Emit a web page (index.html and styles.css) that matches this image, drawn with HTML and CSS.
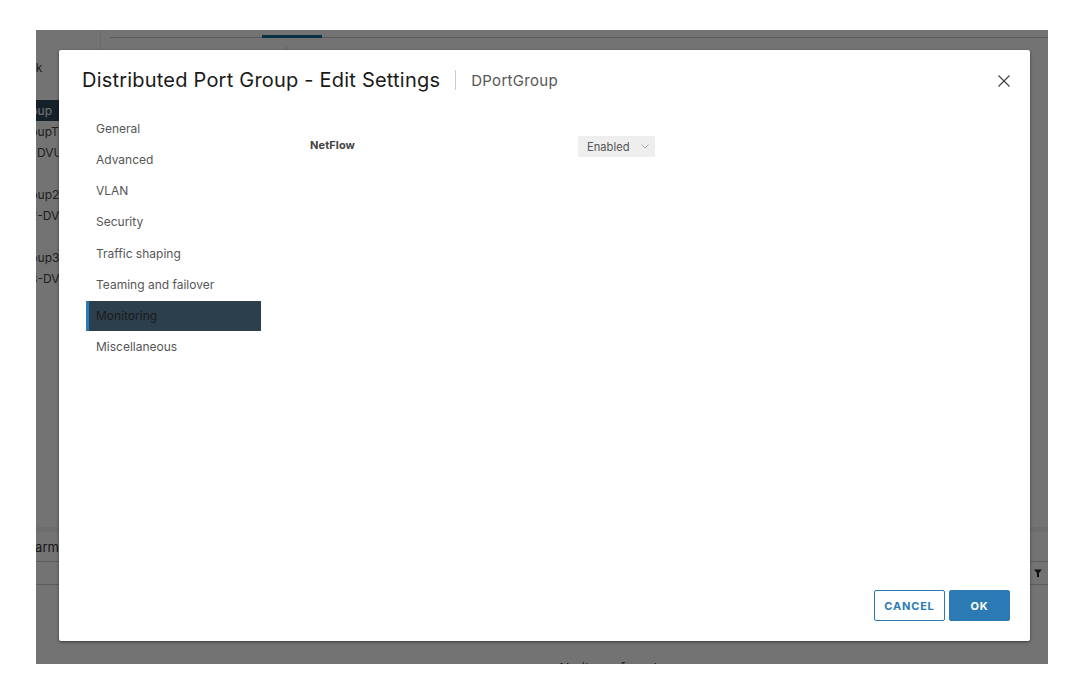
FILE: index.html
```html
<!DOCTYPE html>
<html lang="en">
<head>
<meta charset="utf-8">
<title>Distributed Port Group - Edit Settings</title>
<link rel="stylesheet" href="styles.css">
</head>
<body>
<div class="stage">
  <div class="app">
    <div class="app-main">
      <aside class="tree">
        <div class="tree-row tree-first">Network</div>
        <div class="tree-row tree-selected">DPortGroup</div>
        <div class="tree-row">DPortGroupT</div>
        <div class="tree-row tree-uplink">DVUplinks</div>
        <div class="tree-gap"></div>
        <div class="tree-row">DPortGroup2</div>
        <div class="tree-row tree-cut">2-DVUplinks</div>
        <div class="tree-gap"></div>
        <div class="tree-row">DPortGroup3</div>
        <div class="tree-row tree-cut">3-DVUplinks</div>
      </aside>
      <main class="tabs-area">
        <div class="tabs-line"><span class="tab-active"></span></div>
        <div class="pane-divider"></div>
      </main>
    </div>
    <section class="tasks">
      <div class="tasks-head"><span class="tasks-title">Alarms</span></div>
      <div class="tasks-cols"><svg class="filter" viewBox="0 0 8 8" width="8" height="8"><path d="M0 0.5H8L5 4V8H3V4Z"/></svg></div>
      <div class="tasks-empty">No items found</div>
    </section>
  </div>
  <div class="overlay">
    <div class="modal">
      <header class="modal-head">
        <h1 class="modal-title">Distributed Port Group - Edit Settings</h1>
        <span class="modal-sub">DPortGroup</span>
        <svg class="close" viewBox="0 0 12 12" width="12" height="12"><path d="M0.5 0.5L11.5 11.5M11.5 0.5L0.5 11.5"/></svg>
      </header>
      <div class="modal-body">
        <nav class="nav">
          <a class="nav-item">General</a>
          <a class="nav-item">Advanced</a>
          <a class="nav-item">VLAN</a>
          <a class="nav-item">Security</a>
          <a class="nav-item">Traffic shaping</a>
          <a class="nav-item">Teaming and failover</a>
          <a class="nav-item nav-active">Monitoring</a>
          <a class="nav-item">Miscellaneous</a>
        </nav>
        <div class="form">
          <label class="form-label">NetFlow</label>
          <div class="select">
            <span>Enabled</span>
            <svg class="chevron" viewBox="0 0 8 5" width="8" height="5"><path d="M0.5 0.5L4 4L7.5 0.5"/></svg>
          </div>
        </div>
      </div>
      <footer class="modal-foot">
        <button class="btn btn-outline">CANCEL</button>
        <button class="btn btn-solid">OK</button>
      </footer>
    </div>
  </div>
</div>
</body>
</html>
```
FILE: styles.css
```css
* { box-sizing: border-box; }
html, body { height: 100%; }
body {
  margin: 0;
  background: #fff;
  padding: 30px 30px 20px 36px;
  font-family: "Inter", "Liberation Sans", sans-serif;
  overflow: hidden;
}
.stage {
  position: relative;
  height: 634px;
  overflow: hidden;
  background: #fff;
}
.app {
  height: 100%;
  display: flex;
  flex-direction: column;
  color: #333;
}
.app-main { flex: 1; display: flex; min-height: 0; }
.tree {
  width: 65px;
  border-right: 1px solid #eee;
  font-size: 12px;
  overflow: hidden;
  padding-top: 27px;
}
.tree-row {
  height: 21px;
  line-height: 21px;
  white-space: nowrap;
  overflow: hidden;
  text-indent: -51px;
  color: #444;
}
.tree-first { text-indent: -42px; margin-bottom: 22px; }
.tree-selected { background: #2f4a5a; color: #fff; }
.tree-cut { text-indent: -6px; }
.tree-uplink { text-indent: 1px; }
.tree-gap { height: 21px; }
.tabs-area { flex: 1; padding: 5px 0 0 9px; }
.tabs-line { height: 3px; border-bottom: 1px solid #ccc; }
.tab-active {
  display: block;
  width: 60px;
  height: 3px;
  margin-left: 152px;
  background: #1a6a98;
}
.pane-divider {
  height: 20px;
  margin: 9px 0 0 176px;
  border-left: 1px solid #ccc;
}
.tasks { height: 137px; flex: none; background: #fff; }
.tasks-head {
  height: 35px;
  padding-top: 8px;
  border-top: 5px solid #f2f2f2;
  border-bottom: 1px solid #ccc;
  font-size: 13px;
  overflow: hidden;
  white-space: nowrap;
}
.tasks-title { display: block; text-indent: -13px; line-height: 15px; overflow: hidden; color: #333; }
.tasks-cols {
  height: 23px;
  border-bottom: 1px solid #ccc;
  display: flex;
  justify-content: flex-end;
  align-items: center;
  padding-right: 6px;
}
.filter path { fill: #222; }
.tasks-empty {
  margin-top: 75px;
  padding-left: 133px;
  text-align: center;
  font-size: 13px;
  letter-spacing: .3px;
  color: #333;
}
.overlay {
  position: absolute;
  inset: 0;
  background: rgba(0, 0, 0, .55);
  display: flex;
  padding: 20px 18px 23px 23px;
}
.modal {
  flex: 1;
  background: #fff;
  display: flex;
  flex-direction: column;
  border-radius: 2px;
  box-shadow: 0 1px 3px rgba(0, 0, 0, .5);
}
.modal-head {
  display: flex;
  align-items: center;
  height: 60px;
  padding: 0 20px 0 23px;
  flex: none;
}
.modal-title {
  margin: 0;
  font-size: 20px;
  font-weight: 400;
  letter-spacing: .21px;
  color: #1a1a1a;
  white-space: nowrap;
  padding-right: 15px;
  border-right: 1px solid #ccc;
  line-height: 20px;
}
.modal-sub { margin-left: 15px; font-size: 15px; letter-spacing: .3px; color: #565656; flex: 1; }
.close { margin-top: 2px; }
.close path { stroke: #444; stroke-width: 1.2; fill: none; }
.modal-body { flex: 1; display: flex; min-height: 0; padding: 3.5px 0 0 27px; }
.nav { width: 175px; flex: none; display: flex; flex-direction: column; gap: 1.25px; }
.nav-item {
  height: 30px;
  line-height: 29px;
  padding-left: 10px;
  font-size: 12px;
  color: #565656;
}
.nav-active {
  background: #2b3f4c;
  border-left: 3px solid #2a7ab8;
  padding-left: 7px;
  color: #1b1b1b;
}
.form {
  flex: 1;
  display: grid;
  grid-template-columns: 268px 77px;
  align-items: center;
  align-content: start;
  padding: 22.5px 0 0 49px;
}
.form-label { font-size: 11px; font-weight: 700; letter-spacing: .1px; color: #444; padding-bottom: 3px; }
.select {
  height: 21px;
  background: #eee;
  display: flex;
  align-items: center;
  justify-content: space-between;
  padding: 0 6px 0 9px;
  font-size: 11.2px;
  color: #565656;
}
.chevron path { stroke: #aaa; stroke-width: 1; fill: none; }
.modal-foot {
  height: 51px;
  flex: none;
  display: flex;
  justify-content: flex-end;
  gap: 4px;
  padding: 0 20px 20px 0;
}
.btn {
  height: 31px;
  font: 700 11px "Inter", "Liberation Sans", sans-serif;
  letter-spacing: .8px;
  border-radius: 2px;
  padding: 0;
}
.btn-outline { width: 71px; background: #fff; color: #2b7ab4; border: 1px solid #2b7ab4; }
.btn-solid { width: 61px; background: #2b7ab4; color: #fff; border: 1px solid #2b7ab4; }
```
